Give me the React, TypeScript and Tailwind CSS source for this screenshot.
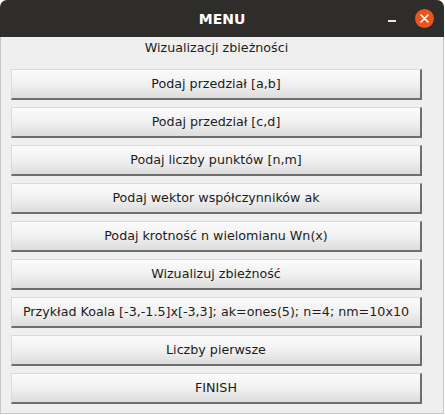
import React from 'react';

const buttons = [
  'Podaj przedział [a,b]',
  'Podaj przedział [c,d]',
  'Podaj liczby punktów [n,m]',
  'Podaj wektor współczynników ak',
  'Podaj krotność n wielomianu Wn(x)',
  'Wizualizuj zbieżność',
  'Przykład Koala [-3,-1.5]x[-3,3]; ak=ones(5); n=4; nm=10x10',
  'Liczby pierwsze',
  'FINISH',
];

function MenuButton({ label }: { label: string }) {
  return (
    <button
      type="button"
      className="h-[31px] w-full flex items-center justify-center border-t border-l border-t-[#dadada] border-l-[#dadada] border-r-2 border-b-2 border-r-[#6e6e6e] border-b-[#6e6e6e] bg-gradient-to-b from-[#fbfbfb] via-[#f1f1f1] to-[#dcdcdc] text-[12.7px] text-[#1c1c1c]"
    >
      {label}
    </button>
  );
}

export default function App() {
  return (
    <div
      className="w-[445px] h-[415px] bg-white"
      style={{ fontFamily: '"DejaVu Sans", sans-serif' }}
    >
      <div className="w-[444px] h-[414px] flex flex-col rounded-t-[7px] overflow-hidden">
        <div className="h-[37px] shrink-0 bg-[#2f2d2b] grid grid-cols-[1fr_auto_1fr] items-center pt-[2px]">
          <div />
          <span className="text-white font-bold text-[14px]">MENU</span>
          <div className="flex items-center justify-end gap-[19px] pr-[10px]">
            <span className="block w-[8px] h-[2px] bg-[#e8e8e8] mt-[3px]" />
            <span className="w-[19px] h-[19px] rounded-full bg-[#e9541f] flex items-center justify-center -mt-[2px]">
              <svg width="9" height="9" viewBox="0 0 9 9">
                <path d="M1 1L8 8M8 1L1 8" stroke="#fff" strokeWidth="1.6" strokeLinecap="round" />
              </svg>
            </span>
          </div>
        </div>
        <div className="flex-1 bg-[#efefef] border-x border-b border-[#c6c6c6] pl-[10px] pr-[21px]">
          <div className="h-[22px] flex items-center justify-center text-[12.7px] text-[#1c1c1c]">
            Wizualizacji zbieżności
          </div>
          <div className="mt-[10px] flex flex-col gap-[7px]">
            {buttons.map((b) => (
              <MenuButton key={b} label={b} />
            ))}
          </div>
        </div>
      </div>
    </div>
  );
}
